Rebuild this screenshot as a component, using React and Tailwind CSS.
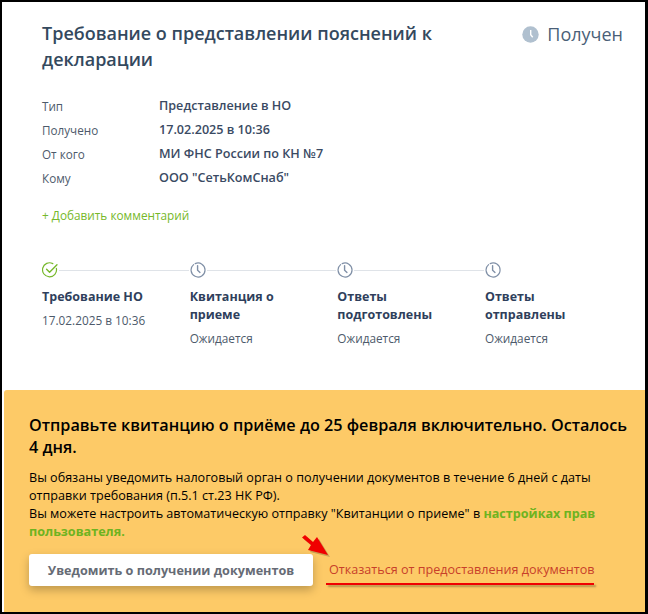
import React from "react";

const ClockOutline = () => (
  <svg width="16" height="16" viewBox="0 0 16 16" fill="none" stroke="#7f8fa6" strokeWidth="1.2" strokeLinecap="round">
    <path d="M5.2 1.6a7 7 0 1 1-1.6 1" />
    <path d="M7.6 3.6v4.6l2.4 2.2" strokeWidth="1.4" />
  </svg>
);

const CheckOutline = () => (
  <svg width="16" height="16" viewBox="0 0 16 16" fill="none" stroke="#76b82a" strokeWidth="1.2" strokeLinecap="round" strokeLinejoin="round">
    <path d="M14.4 6.4A7 7 0 1 1 10.8 1.6" />
    <path d="M4.6 7.2l3 3L15 2.8" strokeWidth="1.4" />
  </svg>
);

const StatusClock = () => (
  <svg width="17" height="17" viewBox="0 0 17 17">
    <circle cx="8.5" cy="8.5" r="8.2" fill="#b0c0cf" />
    <path d="M8.7 4v4.8l2 2.4" fill="none" stroke="#fff" strokeWidth="1.4" />
  </svg>
);

const rows = [
  ["Тип", "Представление в НО"],
  ["Получено", "17.02.2025 в 10:36"],
  ["От кого", "МИ ФНС России по КН №7"],
  ["Кому", 'ООО "СетьКомСнаб"'],
];

const steps = [
  { title: "Требование НО", sub: "17.02.2025 в 10:36", done: true },
  { title: "Квитанция о приеме", sub: "Ожидается" },
  { title: "Ответы подготовлены", sub: "Ожидается" },
  { title: "Ответы отправлены", sub: "Ожидается", last: true },
];

const App = () => {
  return (
    <div className="flex h-[614px] w-[648px] flex-col overflow-hidden border-y-2 border-r-[3px] border-l-2 border-black bg-white font-['Open_Sans',sans-serif] text-[#2f3f5c]">
      <div className="h-[388px] pt-[18px] pr-[22px] pl-10">
        <div className="flex items-start justify-between">
          <h1 className="w-[420px] text-[18px] leading-[26px] font-semibold text-[#34495e]">
            Требование о представлении пояснений к декларации
          </h1>
          <div className="flex items-center gap-[8px] pt-[1px] text-[18px] leading-[26px] text-[#4a5f78]">
            <StatusClock />
            Получен
          </div>
        </div>

        <div className="mt-[22px] flex flex-col">
          {rows.map(([label, value]) => (
            <div key={label} className="flex h-6 items-center">
              <div className="w-[117px] pt-[2px] text-[11.7px] text-[#4d5a6b]">{label}</div>
              <div className="text-[12.6px] font-semibold text-[#3a4a63]">{value}</div>
            </div>
          ))}
        </div>

        <div className="mt-[16px] text-[11.8px] leading-[18px] text-[#76b82a]">+ Добавить комментарий</div>

        <div className="mt-[38px] flex">
          {steps.map((s) => (
            <div key={s.title} className="w-[147.67px] shrink-0">
              <div className="flex h-4 items-center">
                {s.done ? <CheckOutline /> : <ClockOutline />}
                {!s.last && <div className="mx-[1px] h-px w-[130px] bg-[#dfe3e8]" />}
              </div>
              <div className="mt-[10px] w-[115px] text-[12.5px] leading-[18px] font-bold text-[#2f3f5c]">{s.title}</div>
              <div className="mt-[5px] text-[11.8px] leading-[18px] text-[#4d5a6b]">{s.sub}</div>
            </div>
          ))}
        </div>
      </div>

      <div className="relative ml-[2px] flex-1 rounded-tl-[3px] bg-[#fdca67] pt-[24px] pr-4 pl-[25px] text-black">
        <h2 className="text-[16.2px] leading-[22px] font-semibold">
          Отправьте квитанцию о приёме до 25 февраля включительно. Осталось 4 дня.
        </h2>
        <p className="mt-[11px] w-[600px] text-[12.6px] leading-[18px]">
          Вы обязаны уведомить налоговый орган о получении документов в течение 6 дней с даты отправки требования (п.5.1 ст.23 НК РФ).
          <br />
          Вы можете настроить автоматическую отправку "Квитанции о приеме" в{" "}
          <span className="font-bold text-[#6eb320]">настройках прав пользователя.</span>
        </p>
        <div className="mt-[13px] flex items-center">
          <button className="h-8 w-[284px] rounded-[3px] bg-white text-[12.65px] font-bold text-[#666b75] shadow-[0_4px_10px_rgba(0,0,0,0.25)]">
            Уведомить о получении документов
          </button>
          <a className="ml-4 text-[12.6px] text-[#c8402a]">Отказаться от предоставления документов</a>
        </div>
        {/* red annotation drawn over the screenshot */}
        <div className="absolute top-[193px] left-[322px] h-[2px] w-[268px] bg-[#f00000] shadow-[2px_2px_2px_rgba(0,0,0,0.3)]" />
        <svg className="absolute top-[144px] left-[296px]" width="34" height="27" viewBox="0 0 34 27">
          <path d="M2 3.5 L5 1 L13 8 L17 3 L28 21 L8 16 L11 11 Z" fill="#000" opacity="0.2" transform="translate(2 2)" />
          <path d="M2 3.5 L5 1 L13 8 L17 3 L28 21 L8 16 L11 11 Z" fill="#f00000" />
        </svg>
      </div>
    </div>
  );
};

export default App;
